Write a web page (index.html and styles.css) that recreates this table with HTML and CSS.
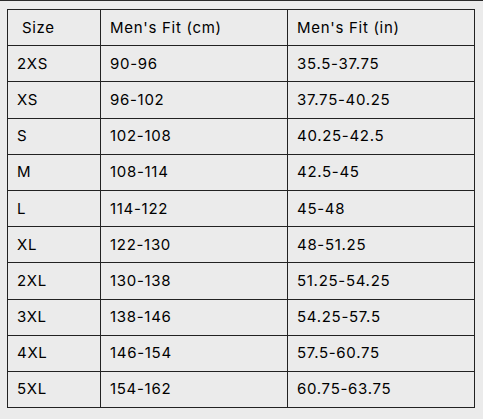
FILE: index.html
```html
<!DOCTYPE html>
<html>
<head>
<meta charset="utf-8">
<link rel="stylesheet" href="styles.css">
</head>
<body>
<div class="page">
<table class="size-table">
  <colgroup><col class="c1"><col class="c2"><col class="c3"></colgroup>
  <tr><td class="head">&nbsp;Size</td><td>Men's Fit (cm)</td><td>Men's Fit (in)</td></tr>
  <tr><td>2XS</td><td>90-96</td><td>35.5-37.75</td></tr>
  <tr><td>XS</td><td>96-102</td><td>37.75-40.25</td></tr>
  <tr><td>S</td><td>102-108</td><td>40.25-42.5</td></tr>
  <tr><td>M</td><td>108-114</td><td>42.5-45</td></tr>
  <tr><td>L</td><td>114-122</td><td>45-48</td></tr>
  <tr><td>XL</td><td>122-130</td><td>48-51.25</td></tr>
  <tr><td>2XL</td><td>130-138</td><td>51.25-54.25</td></tr>
  <tr><td>3XL</td><td>138-146</td><td>54.25-57.5</td></tr>
  <tr><td>4XL</td><td>146-154</td><td>57.5-60.75</td></tr>
  <tr><td>5XL</td><td>154-162</td><td>60.75-63.75</td></tr>
</table>
</div>
</body>
</html>
```
FILE: styles.css
```css
html, body {
  margin: 0;
  padding: 0;
  background: #ebebeb;
}
.page {
  width: 483px;
  height: 419px;
  box-sizing: border-box;
  border-top: 1px solid #2a2a2a;
  padding: 8px 0 0 7px;
}
.size-table {
  border-collapse: collapse;
  table-layout: fixed;
  width: 467px;
  font-family: Inter, "Liberation Sans", sans-serif;
  font-size: 15px;
  font-weight: 400;
  letter-spacing: 0.7px;
  color: #000;
}
.c1 { width: 93px; }
.c2 { width: 187px; }
.c3 { width: 187px; }
.size-table td {
  border: 1px solid #222;
  padding: 0 0 0 9px;
  line-height: 18px;
  white-space: pre;
  box-sizing: border-box;
  height: 36.2px;
}
```
